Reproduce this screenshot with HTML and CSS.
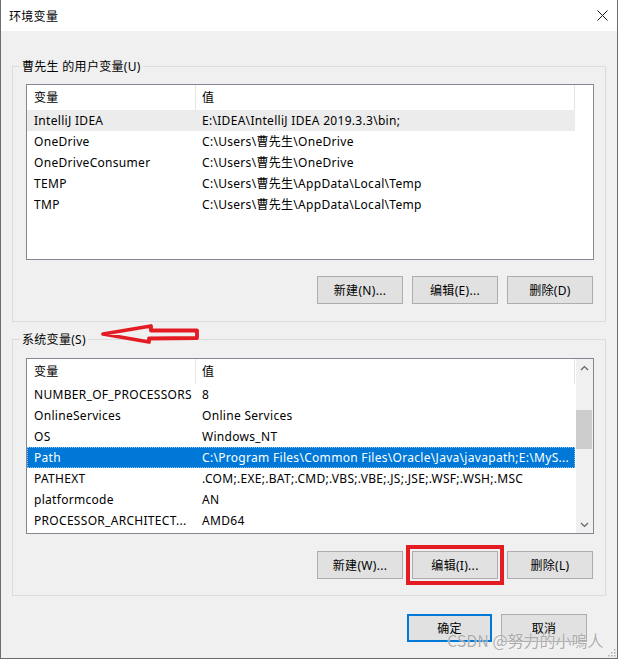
FILE: index.html
```html
<!DOCTYPE html>
<html lang="zh-CN">
<head>
<meta charset="utf-8">
<title>环境变量</title>
<link rel="stylesheet" href="styles.css">
</head>
<body>
<div class="window">
  <div class="titlebar">
    <span class="title">环境变量</span>
    <svg class="close" width="11" height="11" viewBox="0 0 11 11"><path d="M0.5 0.5L10.5 10.5M10.5 0.5L0.5 10.5" stroke="#1a1a1a" stroke-width="1" fill="none"/></svg>
  </div>
  <div class="content">
    <fieldset class="group group1">
      <legend>曹先生 的用户变量(U)</legend>
      <div class="list">
        <div class="table">
          <div class="header"><div class="cell c1">变量</div><div class="cell c2">值</div></div>
          <div class="row hl"><div class="cell c1">IntelliJ IDEA</div><div class="cell c2">E:\IDEA\IntelliJ IDEA 2019.3.3\bin;</div></div>
          <div class="row"><div class="cell c1">OneDrive</div><div class="cell c2">C:\Users\曹先生\OneDrive</div></div>
          <div class="row"><div class="cell c1">OneDriveConsumer</div><div class="cell c2">C:\Users\曹先生\OneDrive</div></div>
          <div class="row"><div class="cell c1">TEMP</div><div class="cell c2">C:\Users\曹先生\AppData\Local\Temp</div></div>
          <div class="row"><div class="cell c1">TMP</div><div class="cell c2">C:\Users\曹先生\AppData\Local\Temp</div></div>
        </div>
      </div>
      <div class="buttons">
        <div class="btn">新建(N)...</div>
        <div class="btn">编辑(E)...</div>
        <div class="btn">删除(D)</div>
      </div>
    </fieldset>
    <fieldset class="group group2">
      <legend>系统变量(S)</legend>
      <div class="list">
        <div class="table">
          <div class="header"><div class="cell c1">变量</div><div class="cell c2">值</div></div>
          <div class="row"><div class="cell c1">NUMBER_OF_PROCESSORS</div><div class="cell c2">8</div></div>
          <div class="row"><div class="cell c1">OnlineServices</div><div class="cell c2">Online Services</div></div>
          <div class="row"><div class="cell c1">OS</div><div class="cell c2">Windows_NT</div></div>
          <div class="row sel"><div class="cell c1">Path</div><div class="cell c2">C:\Program Files\Common Files\Oracle\Java\javapath;E:\MyS...</div></div>
          <div class="row"><div class="cell c1">PATHEXT</div><div class="cell c2">.COM;.EXE;.BAT;.CMD;.VBS;.VBE;.JS;.JSE;.WSF;.WSH;.MSC</div></div>
          <div class="row"><div class="cell c1">platformcode</div><div class="cell c2">AN</div></div>
          <div class="row"><div class="cell c1">PROCESSOR_ARCHITECT...</div><div class="cell c2">AMD64</div></div>
        </div>
        <div class="scrollbar">
          <div class="sb-btn"><svg width="9" height="6" viewBox="0 0 9 6"><path d="M1 5L4.5 1.5L8 5" stroke="#606060" stroke-width="1.2" fill="none"/></svg></div>
          <div class="sb-track"><div class="sb-thumb"></div></div>
          <div class="sb-btn"><svg width="9" height="6" viewBox="0 0 9 6"><path d="M1 1L4.5 4.5L8 1" stroke="#606060" stroke-width="1.2" fill="none"/></svg></div>
        </div>
      </div>
      <div class="buttons">
        <div class="btn">新建(W)...</div>
        <div class="btn marked">编辑(I)...</div>
        <div class="btn">删除(L)</div>
      </div>
    </fieldset>
    <div class="footer">
      <div class="btn ok">确定</div>
      <div class="btn cancel">取消</div>
    </div>
  </div>
  <svg class="arrow" width="106" height="24" viewBox="0 0 106 24"><polygon points="5,12 53,4 53,8.5 99,8.5 99,16 51,16.5 51,20" fill="none" stroke="#e31b23" stroke-width="3.8" stroke-linejoin="round"/></svg>
  <div class="watermark">CSDN @努力的小嗚人</div>
  <svg class="grip" width="10" height="10" viewBox="0 0 10 10"><g fill="#b0b0b0"><rect x="8" y="2" width="1.5" height="1.5"/><rect x="5" y="5" width="1.5" height="1.5"/><rect x="8" y="5" width="1.5" height="1.5"/><rect x="2" y="8" width="1.5" height="1.5"/><rect x="5" y="8" width="1.5" height="1.5"/><rect x="8" y="8" width="1.5" height="1.5"/></g></svg>
</div>
</body>
</html>
```
FILE: styles.css
```css
* { box-sizing: border-box; }
html, body { margin: 0; padding: 0; }
body {
  width: 618px;
  height: 659px;
  overflow: hidden;
  background: #f0f0f0;
  font-family: "Noto Sans", "Noto Sans CJK SC", sans-serif;
  font-size: 12px;
  letter-spacing: 0.3px;
  color: #000;
}
.window {
  position: relative;
  width: 618px;
  height: 659px;
  border: 1px solid #6d6d6d;
  border-top: none;
  background: #f0f0f0;
  display: flex;
  flex-direction: column;
}
.titlebar {
  height: 31px;
  flex-shrink: 0;
  background: #fff;
  display: flex;
  align-items: center;
  justify-content: space-between;
  padding: 0 9px 0 8px;
}
.title { font-size: 12px; }
.content {
  padding: 0 11px;
  display: flex;
  flex-direction: column;
}
.group {
  margin: 0;
  min-width: 0;
  border: 1px solid #dcdcdc;
  padding: 0 11px 17px 13px;
}
.group1 { margin-top: 27px; }
.group2 { margin-top: 9px; padding-bottom: 16px; }
.group legend {
  height: 17px;
  line-height: 17px;
  padding: 0 2px;
  margin-left: -6px;
}
.list {
  height: 176px;
  border: 1px solid #828790;
  background: #fff;
  display: flex;
}
.group1 .list { margin-top: 9px; }
.group2 .list { margin-top: 10px; }
.table { width: 548px; flex-shrink: 0; }
.header { display: flex; height: 25px; }
.header .cell { line-height: 25px; }
.cell { white-space: nowrap; overflow: hidden; padding-left: 7px; }
.c1 { width: 168px; }
.c2 { width: 380px; }
.header .c2 {
  border-left: 1px solid #e5e5e5;
  border-right: 1px solid #e5e5e5;
  padding-left: 6px;
}
.row { display: flex; height: 21px; line-height: 21px; }
.row.hl { background: #ececec; }
.row.sel {
  background: #0078d7;
  color: #fff;
  outline: 1px dotted #8cc0ee;
  outline-offset: -1px;
}
.scrollbar {
  width: 17px;
  margin-left: auto;
  background: #f0f0f0;
  display: flex;
  flex-direction: column;
}
.sb-btn {
  height: 17px;
  display: flex;
  align-items: center;
  justify-content: center;
}
.sb-track { flex: 1; }
.sb-thumb {
  margin: 34px 1px 0 0;
  height: 39px;
  background: #cdcdcd;
}
.buttons {
  margin-top: 16px;
  padding-right: 1px;
  display: flex;
  justify-content: flex-end;
  gap: 9px;
}
.group2 .buttons { margin-top: 17px; }
.btn {
  width: 86px;
  height: 28px;
  border: 1px solid #adadad;
  background: #e1e1e1;
  display: flex;
  align-items: center;
  justify-content: center;
}
.btn.marked {
  outline: 4px solid #e31b23;
  outline-offset: 2px;
}
.footer {
  margin-top: 18px;
  padding-right: 19px;
  display: flex;
  justify-content: flex-end;
  gap: 9px;
}
.btn.ok {
  width: 85px;
  border: 2px solid #0078d7;
}
.arrow {
  position: absolute;
  left: 97px;
  top: 322px;
}
.watermark {
  position: absolute;
  left: 446px;
  top: 628px;
  font-family: "Noto Sans CJK SC", sans-serif;
  font-size: 16px;
  letter-spacing: 0;
  color: rgba(150, 150, 150, 0.8);
  text-shadow: 0 0 1px #fff;
  white-space: nowrap;
}
.grip {
  position: absolute;
  right: 1px;
  bottom: 1px;
}
```
